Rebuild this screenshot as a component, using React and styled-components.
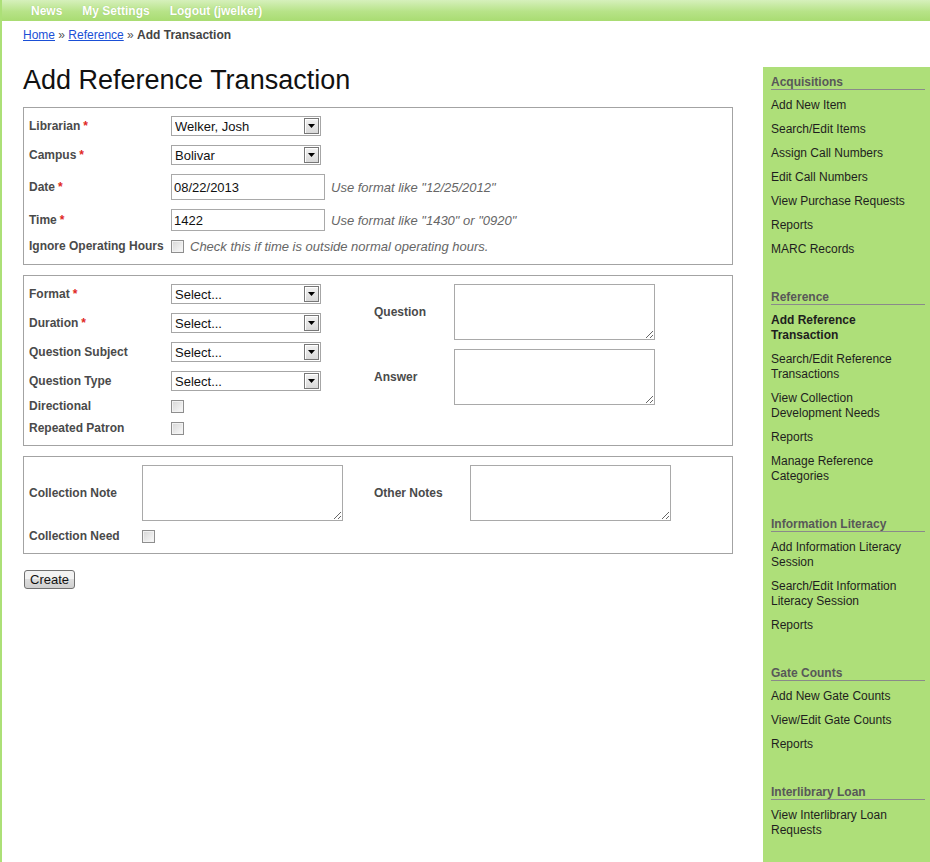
import styled, { createGlobalStyle } from "styled-components";

const GlobalStyle = createGlobalStyle`
  html, body {
    margin: 0;
    padding: 0;
    background: #fff;
  }
  body {
    font-family: "Liberation Sans", Arial, sans-serif;
    font-size: 12px;
    color: #222;
  }
`;

const Page = styled.div`
  min-height: 862px;
  border-left: 2px solid #ace077;
  box-sizing: border-box;
  overflow: hidden;
`;

const TopBar = styled.nav`
  height: 21px;
  display: flex;
  align-items: center;
  padding-left: 19px;
  background: linear-gradient(#d6f0bc, #b7e388 55%, #a9dc72);
`;

const NavLink = styled.a`
  color: #fff;
  font-weight: bold;
  font-size: 12px;
  text-decoration: none;
  padding: 0 10px;
  text-shadow: 0 0 1px rgba(90, 140, 40, 0.35);
`;

const Body = styled.div`
  display: flex;
  min-height: 841px;
`;

const Main = styled.main`
  width: 710px;
  margin-left: 21px;
  flex-shrink: 0;
`;

const Breadcrumb = styled.div`
  margin-top: 7px;
  line-height: 14px;
  color: #555;

  a {
    color: #1a4fd6;
    text-decoration: underline;
  }
  strong {
    color: #444;
  }
`;

const Title = styled.h1`
  margin: 23px 0 11px;
  font-size: 27px;
  line-height: 31px;
  font-weight: normal;
  color: #111;
`;

const Box = styled.div`
  border: 1px solid #a3a3a3;
  padding: ${(p) => p.$pad || "8px 5px 10px"};
  margin-bottom: 10px;
  box-sizing: border-box;
  display: ${(p) => (p.$cols ? "flex" : "block")};
  gap: 53px;
`;

const Stack = styled.div`
  display: flex;
  flex-direction: column;
  gap: 9px;
`;

const Row = styled.div`
  display: flex;
  align-items: center;
`;

const Label = styled.label`
  width: ${(p) => p.$w || 142}px;
  flex-shrink: 0;
  font-weight: bold;
  color: #4a4a4a;
  line-height: 13px;
  margin-left: ${(p) => p.$ml || 0}px;
`;

const Req = styled.span`
  color: #e0281e;
  margin-left: 3px;
`;

const Help = styled.span`
  font-style: italic;
  font-size: 13px;
  line-height: 13px;
  color: #666;
  margin-left: 6px;
`;

const SelectWrap = styled.span`
  position: relative;
  display: inline-block;
  width: 150px;
  height: 20px;
`;

const SelectEl = styled.select`
  appearance: none;
  width: 100%;
  height: 100%;
  box-sizing: border-box;
  border: 1px solid #a6a6a6;
  background: #fff;
  padding: 0 18px 0 3px;
  font-family: "Liberation Sans", Arial, sans-serif;
  font-size: 13px;
  color: #111;
  border-radius: 0;
  outline: none;
`;

const Arrow = styled.span`
  position: absolute;
  top: 2px;
  right: 2px;
  width: 15px;
  height: 16px;
  box-sizing: border-box;
  border: 1px solid #777;
  background: linear-gradient(#f2f2f2, #d9d9d9);
  box-shadow: inset 1px 1px 0 #fff;
  display: flex;
  align-items: center;
  justify-content: center;
  pointer-events: none;
`;

const TextInput = styled.input`
  width: 154px;
  height: ${(p) => p.$h || 22}px;
  box-sizing: border-box;
  border: 1px solid #a9a9a9;
  padding: 0 2px;
  font-family: "Liberation Sans", Arial, sans-serif;
  font-size: 13px;
  color: #111;
  outline: none;
`;

const Check = styled.input.attrs({ type: "checkbox" })`
  appearance: none;
  width: 13px;
  height: 13px;
  margin: 0;
  box-sizing: border-box;
  border: 1px solid #8e8e8e;
  background: linear-gradient(135deg, #d6d6d6, #fafafa);
  box-shadow: inset 0 0 0 1px #f2f2f2;
  flex-shrink: 0;
`;

const TextArea = styled.textarea`
  width: 201px;
  height: 56px;
  box-sizing: border-box;
  border: 1px solid #a9a9a9;
  font-family: "Liberation Sans", Arial, sans-serif;
  font-size: 13px;
  margin: 0;
  display: block;
  outline: none;
`;

const Button = styled.button`
  margin: 6px 0 0 1px;
  height: 19px;
  padding: 0 5px;
  font-family: "Liberation Sans", Arial, sans-serif;
  font-size: 13px;
  color: #111;
  border: 1px solid #707070;
  border-radius: 3px;
  background: linear-gradient(#f2f2f2 50%, #dddddd 50%, #cfcfcf);
  line-height: 15px;
`;

const Sidebar = styled.aside`
  flex: 1;
  margin: 46px 0 0 30px;
  background: #aedf79;
  padding: 8px 5px 20px 8px;
`;

const Section = styled.section`
  margin-bottom: 33px;
`;

const SideHeading = styled.h3`
  margin: 0 0 8px;
  font-size: 12px;
  line-height: 14px;
  color: #585858;
  border-bottom: 1px solid #8a8a8a;
`;

const SideLink = styled.a`
  display: block;
  color: #1e1e1e;
  text-decoration: none;
  line-height: 15px;
  margin-bottom: 9px;
  font-weight: ${(p) => (p.$active ? "bold" : "normal")};
`;

const Select = ({ value }) => (
  <SelectWrap>
    <SelectEl defaultValue={value}>
      <option>{value}</option>
    </SelectEl>
    <Arrow>
      <svg width="7" height="4" viewBox="0 0 7 4">
        <path d="M0 0h7L3.5 4z" fill="#000" />
      </svg>
    </Arrow>
  </SelectWrap>
);

const menu = [
  {
    title: "Acquisitions",
    links: [
      "Add New Item",
      "Search/Edit Items",
      "Assign Call Numbers",
      "Edit Call Numbers",
      "View Purchase Requests",
      "Reports",
      "MARC Records",
    ],
  },
  {
    title: "Reference",
    links: [
      "Add Reference Transaction",
      "Search/Edit Reference Transactions",
      "View Collection Development Needs",
      "Reports",
      "Manage Reference Categories",
    ],
    active: 0,
  },
  {
    title: "Information Literacy",
    links: [
      "Add Information Literacy Session",
      "Search/Edit Information Literacy Session",
      "Reports",
    ],
  },
  {
    title: "Gate Counts",
    links: ["Add New Gate Counts", "View/Edit Gate Counts", "Reports"],
  },
  {
    title: "Interlibrary Loan",
    links: ["View Interlibrary Loan Requests"],
  },
];

export default function App() {
  return (
    <Page>
      <GlobalStyle />
      <TopBar>
        <NavLink href="#">News</NavLink>
        <NavLink href="#">My Settings</NavLink>
        <NavLink href="#">Logout (jwelker)</NavLink>
      </TopBar>
      <Body>
        <Main>
          <Breadcrumb>
            <a href="#">Home</a> » <a href="#">Reference</a> »{" "}
            <strong>Add Transaction</strong>
          </Breadcrumb>
          <Title>Add Reference Transaction</Title>

          <Box $pad="8px 5px 11px">
            <Stack>
              <Row>
                <Label>
                  Librarian<Req>*</Req>
                </Label>
                <Select value="Welker, Josh" />
              </Row>
              <Row>
                <Label>
                  Campus<Req>*</Req>
                </Label>
                <Select value="Bolivar" />
              </Row>
              <Row>
                <Label>
                  Date<Req>*</Req>
                </Label>
                <TextInput $h={26} defaultValue="08/22/2013" />
                <Help>Use format like "12/25/2012"</Help>
              </Row>
              <Row>
                <Label>
                  Time<Req>*</Req>
                </Label>
                <TextInput defaultValue="1422" />
                <Help>Use format like "1430" or "0920"</Help>
              </Row>
              <Row>
                <Label>Ignore Operating Hours</Label>
                <Check />
                <Help>Check this if time is outside normal operating hours.</Help>
              </Row>
            </Stack>
          </Box>

          <Box $cols>
            <Stack>
              <Row>
                <Label>
                  Format<Req>*</Req>
                </Label>
                <Select value="Select..." />
              </Row>
              <Row>
                <Label>
                  Duration<Req>*</Req>
                </Label>
                <Select value="Select..." />
              </Row>
              <Row>
                <Label>Question Subject</Label>
                <Select value="Select..." />
              </Row>
              <Row>
                <Label>Question Type</Label>
                <Select value="Select..." />
              </Row>
              <Row>
                <Label>Directional</Label>
                <Check />
              </Row>
              <Row>
                <Label>Repeated Patron</Label>
                <Check />
              </Row>
            </Stack>
            <Stack>
              <Row>
                <Label $w={80}>Question</Label>
                <TextArea />
              </Row>
              <Row>
                <Label $w={80}>Answer</Label>
                <TextArea />
              </Row>
            </Stack>
          </Box>

          <Box>
            <Stack>
              <Row>
                <Label $w={113}>Collection Note</Label>
                <TextArea />
                <Label $w={96} $ml={31}>
                  Other Notes
                </Label>
                <TextArea />
              </Row>
              <Row>
                <Label $w={113}>Collection Need</Label>
                <Check />
              </Row>
            </Stack>
          </Box>

          <Button>Create</Button>
        </Main>

        <Sidebar>
          {menu.map((s) => (
            <Section key={s.title}>
              <SideHeading>{s.title}</SideHeading>
              {s.links.map((l, i) => (
                <SideLink key={l + i} href="#" $active={s.active === i}>
                  {l}
                </SideLink>
              ))}
            </Section>
          ))}
        </Sidebar>
      </Body>
    </Page>
  );
}
